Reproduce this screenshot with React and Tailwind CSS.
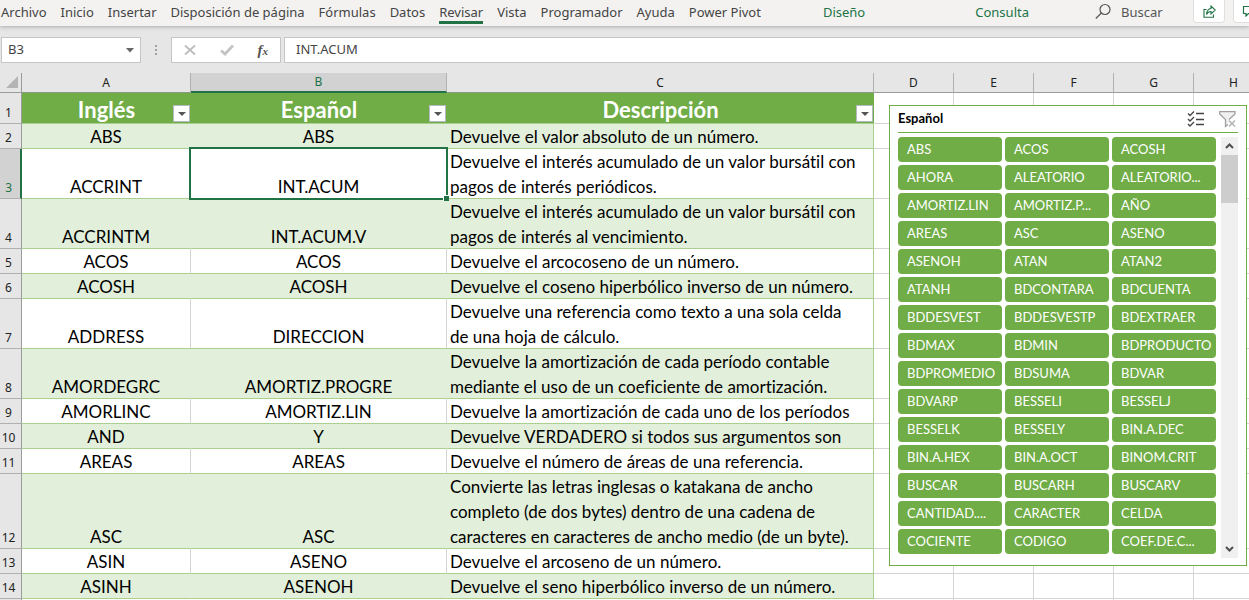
import { useState } from "react"

const TABS = [
  "Archivo",
  "Inicio",
  "Insertar",
  "Disposición de página",
  "Fórmulas",
  "Datos",
  "Revisar",
  "Vista",
  "Programador",
  "Ayuda",
  "Power Pivot",
]

const ROWS = [
  { n: 2, en: "ABS", es: "ABS", desc: "Devuelve el valor absoluto de un número." },
  { n: 3, en: "ACCRINT", es: "INT.ACUM", desc: "Devuelve el interés acumulado de un valor bursátil con\npagos de interés periódicos." },
  { n: 4, en: "ACCRINTM", es: "INT.ACUM.V", desc: "Devuelve el interés acumulado de un valor bursátil con\npagos de interés al vencimiento." },
  { n: 5, en: "ACOS", es: "ACOS", desc: "Devuelve el arcocoseno de un número." },
  { n: 6, en: "ACOSH", es: "ACOSH", desc: "Devuelve el coseno hiperbólico inverso de un número." },
  { n: 7, en: "ADDRESS", es: "DIRECCION", desc: "Devuelve una referencia como texto a una sola celda\nde una hoja de cálculo." },
  { n: 8, en: "AMORDEGRC", es: "AMORTIZ.PROGRE", desc: "Devuelve la amortización de cada período contable\nmediante el uso de un coeficiente de amortización." },
  { n: 9, en: "AMORLINC", es: "AMORTIZ.LIN", desc: "Devuelve la amortización de cada uno de los períodos" },
  { n: 10, en: "AND", es: "Y", desc: "Devuelve VERDADERO si todos sus argumentos son" },
  { n: 11, en: "AREAS", es: "AREAS", desc: "Devuelve el número de áreas de una referencia." },
  { n: 12, en: "ASC", es: "ASC", desc: "Convierte las letras inglesas o katakana de ancho\ncompleto (de dos bytes) dentro de una cadena de\ncaracteres en caracteres de ancho medio (de un byte)." },
  { n: 13, en: "ASIN", es: "ASENO", desc: "Devuelve el arcoseno de un número." },
  { n: 14, en: "ASINH", es: "ASENOH", desc: "Devuelve el seno hiperbólico inverso de un número." },
]

const SLICER = [
  "ABS", "ACOS", "ACOSH",
  "AHORA", "ALEATORIO", "ALEATORIO...",
  "AMORTIZ.LIN", "AMORTIZ.P...", "AÑO",
  "AREAS", "ASC", "ASENO",
  "ASENOH", "ATAN", "ATAN2",
  "ATANH", "BDCONTARA", "BDCUENTA",
  "BDDESVEST", "BDDESVESTP", "BDEXTRAER",
  "BDMAX", "BDMIN", "BDPRODUCTO",
  "BDPROMEDIO", "BDSUMA", "BDVAR",
  "BDVARP", "BESSELI", "BESSELJ",
  "BESSELK", "BESSELY", "BIN.A.DEC",
  "BIN.A.HEX", "BIN.A.OCT", "BINOM.CRIT",
  "BUSCAR", "BUSCARH", "BUSCARV",
  "CANTIDAD....", "CARACTER", "CELDA",
  "COCIENTE", "CODIGO", "COEF.DE.C...",
]

const EMPTY_COLS = ["D", "E", "F", "G", "H"]

function Ribbon() {
  return (
    <header className="relative z-10 flex h-[26px] shrink-0 items-start bg-[#f3f2f1] text-[13px] leading-6 text-[#444444] shadow-[0_1px_4px_rgba(0,0,0,0.25)]">
      <nav className="flex gap-3.5 pl-px whitespace-nowrap">
        {TABS.map((tab) => (
          <a
            key={tab}
            href="#"
            className={tab === "Revisar" ? "h-6 border-b-3 border-[#217346]" : "h-6"}
          >
            {tab}
          </a>
        ))}
      </nav>
      <nav className="ml-[62px] flex gap-[110px] text-[#217346]">
        <a href="#">Diseño</a>
        <a href="#">Consulta</a>
      </nav>
      <label className="ml-auto flex items-center gap-2.5 pr-6">
        <svg width="16" height="24" viewBox="0 0 16 24" fill="none" stroke="#555" strokeWidth="1.2">
          <circle cx="10" cy="9.500" r="5" />
          <path d="M6.400 13L0.800 18.500" />
        </svg>
        <input
          type="text"
          aria-label="Buscar"
          placeholder="Buscar"
          className="w-12 bg-transparent placeholder:text-[#555555] outline-none"
        />
      </label>
      <button aria-label="Compartir" className="mr-2 flex h-[23px] w-8 items-center justify-center rounded-b-sm border border-t-0 border-[#e1dfdd] bg-white">
        <svg width="13" height="13" viewBox="0 0 13 13" fill="none" stroke="#217346" strokeWidth="1.1">
          <path d="M3.500 4.500H1V12.300H10.500V9.500" />
          <path d="M3.500 9.500C3.800 6 5.500 3.800 8 3.500V1L12.300 5L8 9V6.500C6 6.500 4.500 7.500 3.500 9.500Z" />
        </svg>
      </button>
      <button aria-label="Comentarios" className="flex h-[23px] w-4 items-center overflow-hidden rounded-bl-sm border border-t-0 border-r-0 border-[#e1dfdd] bg-white pl-2">
        <svg className="shrink-0" width="14" height="12" viewBox="0 0 14 12" fill="none" stroke="#217346" strokeWidth="1.2">
          <path d="M1.500 1.500H12.500V8.500H6.500L4 11V8.500H1.500Z" />
        </svg>
      </button>
    </header>
  )
}

function FormulaBar() {
  return (
    <div className="flex h-[26px] shrink-0 pl-px text-[13px] text-[#444444]">
      <div className="flex w-[140px] items-center border border-[#c6c6c6] bg-white">
        <input aria-label="Cuadro de nombres" defaultValue="B3" className="w-full min-w-0 pl-1.5 outline-none" />
        <button aria-label="Abrir nombres" className="px-1.5">
          <svg width="8" height="5" viewBox="0 0 8 5" fill="#666">
            <path d="M0 0H8L4 4.500Z" />
          </svg>
        </button>
      </div>
      <div className="flex w-[30px] flex-col items-center justify-center gap-0.5">
        <span className="size-0.5 bg-[#a0a0a0]"></span>
        <span className="size-0.5 bg-[#a0a0a0]"></span>
        <span className="size-0.5 bg-[#a0a0a0]"></span>
      </div>
      <div className="flex w-[110px] items-center justify-around border border-[#c6c6c6] bg-white">
        <button aria-label="Cancelar">
          <svg width="12" height="12" viewBox="0 0 12 12" stroke="#bdbdbd" strokeWidth="1.8">
            <path d="M1 1.500L11 10.500M11 1.500L1 10.500" />
          </svg>
        </button>
        <button aria-label="Introducir">
          <svg width="14" height="12" viewBox="0 0 14 12" fill="none" stroke="#c4c4c4" strokeWidth="2.800">
            <path d="M1 6.500L5 10L13 1.500" />
          </svg>
        </button>
        <button aria-label="Insertar función" className="font-['Liberation_Serif',serif] text-[15px] leading-5 font-bold italic text-[#555555]">
          f<span className="text-[11px]">x</span>
        </button>
      </div>
      <input
        aria-label="Barra de fórmulas"
        defaultValue="INT.ACUM"
        className="ml-[3px] min-w-0 flex-1 border border-r-0 border-[#c6c6c6] bg-white pl-[11px] outline-none"
      />
    </div>
  )
}

function FilterButton({ label }) {
  return (
    <button
      aria-label={`Filtrar ${label}`}
      className="absolute right-px bottom-px flex size-[17px] items-center justify-center border border-[#b4b8c0] bg-white"
    >
      <svg width="8" height="4" viewBox="0 0 8 4" fill="#555">
        <path d="M0 0H8L4 4Z" />
      </svg>
    </button>
  )
}

function Sheet() {
  return (
    <table className="w-full min-w-[1274px] table-fixed border-separate border-spacing-0 bg-white">
      <colgroup>
        <col className="w-[22px]" />
        <col className="w-[169px]" />
        <col className="w-[256px]" />
        <col className="w-[427px]" />
        <col className="w-[80px]" />
        <col className="w-[80px]" />
        <col className="w-[80px]" />
        <col className="w-[80px]" />
        <col />
      </colgroup>
      <thead className="bg-[#e6e6e6] text-xs text-[#222222]">
        <tr className="h-5">
          <th className="border-r border-b border-[#9b9b9b] p-0">
            <svg className="ml-1.5" width="13" height="13" viewBox="0 0 13 13" fill="#b4b4b4">
              <path d="M12 0V12H0Z" />
            </svg>
          </th>
          <th className="border-r border-b border-r-[#b0b0b0] border-b-[#8a9a80] p-0 font-normal">A</th>
          <th className="border-r border-b-2 border-r-[#b0b0b0] border-b-[#217346] bg-[#d2d2d2] p-0 font-normal text-[#217346]">B</th>
          <th className="border-r border-b border-r-[#b0b0b0] border-b-[#8a9a80] p-0 font-normal">C</th>
          {EMPTY_COLS.map((col) => (
            <th key={col} className="border-r border-b border-r-[#b0b0b0] border-b-[#9b9b9b] p-0 font-normal">
              {col}
            </th>
          ))}
        </tr>
      </thead>
      <tbody className="font-[Lato,sans-serif] text-[17px] leading-[22px] text-black [font-variant-ligatures:none]">
        <tr className="h-[31px] text-[22px] text-white">
          <RowNumber n={1} />
          {["Inglés", "Español", "Descripción"].map((title) => (
            <th key={title} className="relative border-b border-[#a9d08e] bg-[#70ad47] p-0 align-bottom leading-[27px] font-bold">
              {title}
              <FilterButton label={title} />
            </th>
          ))}
          <EmptyCells />
        </tr>
        {ROWS.map((row) => {
          const even = row.n % 2 === 0
          const cell = even
            ? "border-r border-b border-r-[#e2efda] border-b-[#a9d08e] bg-[#e2efda] p-0 text-center align-bottom"
            : "border-r border-b border-r-[#d4d4d4] border-b-[#a9d08e] p-0 text-center align-bottom"

          return (
            <tr key={row.n}>
              <RowNumber n={row.n} active={row.n === 3} />
              <td className={cell}>{row.en}</td>
              <td className={row.n === 3 ? `${cell} relative` : cell}>
                {row.es}
                {row.n === 3 && (
                  <div className="absolute -top-0.5 -right-0.5 -bottom-0.5 -left-0.5 border-2 border-[#217346]">
                    <span className="absolute -right-[3px] -bottom-[3px] size-1.5 border-t border-l border-white bg-[#217346]"></span>
                  </div>
                )}
              </td>
              <td
                className={
                  even
                    ? "border-r border-b border-[#a9d08e] bg-[#e2efda] p-0 pl-[3px] leading-[25px] whitespace-pre"
                    : "border-r border-b border-[#a9d08e] p-0 pl-[3px] leading-[25px] whitespace-pre"
                }
              >
                <div className="-mb-px">{row.desc}</div>
              </td>
              <EmptyCells />
            </tr>
          )
        })}
        <tr className="h-[25px]">
          <RowNumber />
          <td></td>
          <td></td>
          <td></td>
          <EmptyCells />
        </tr>
      </tbody>
    </table>
  )
}

function RowNumber({ n, active }) {
  return (
    <th
      className={
        active
          ? "border-r-2 border-b border-r-[#217346] border-b-[#b0b0b0] bg-[#d2d2d2] p-0 pr-2 text-right align-bottom font-['Noto_Sans',sans-serif] text-xs leading-5 font-normal text-[#217346]"
          : "border-r border-b border-r-[#9b9b9b] border-b-[#b0b0b0] bg-[#e6e6e6] p-0 pr-1 text-center align-bottom font-['Noto_Sans',sans-serif] text-xs leading-5 font-normal text-[#222222]"
      }
    >
      {n}
    </th>
  )
}

function EmptyCells() {
  return EMPTY_COLS.map((col) => <td key={col} className="border-r border-b border-[#d4d4d4] p-0"></td>)
}

function Slicer() {
  const [picked, setPicked] = useState([])

  const toggle = (name) =>
    setPicked(picked.includes(name) ? picked.filter((p) => p !== name) : [...picked, name])

  return (
    <section className="absolute top-8 left-[889px] w-[358px] border border-[#70ad47] bg-white px-2 pb-[7px] font-[Lato,sans-serif]">
      <div className="flex h-[27px] items-center gap-3.5 border-b border-[#70ad47]">
        <h2 className="flex-1 text-[13px] font-bold text-black">Español</h2>
        <button aria-label="Selección múltiple">
          <svg width="18" height="16" viewBox="0 0 18 16" fill="none" stroke="#444" strokeWidth="1.300">
            <path d="M1 2.500L3 4.500L7 0.500M1 8L3 10L7 6M1 13L3 15L7 11" />
            <path d="M9 2.500H17M9 8.500H17M9 13.500H17" />
          </svg>
        </button>
        <button aria-label="Borrar filtro" onClick={() => setPicked([])} className="mr-0.5">
          <svg width="17" height="17" viewBox="0 0 17 17" fill="none" stroke="#a0a0a0" strokeWidth="1.300">
            <path d="M10 8.500L16 3V0.700H0.700V3L6.500 8.500V15.500L9 13.500" fill="#f0f0f0" />
            <path d="M10 9.500L16 15.500M16 9.500L10 15.500" stroke="#b4b4b4" strokeWidth="1.500" />
          </svg>
        </button>
      </div>
      <div className="flex justify-between pt-1">
        <div className="grid w-[318px] grid-cols-3 gap-[3px] pb-1">
          {SLICER.map((name) => (
            <button
              key={name}
              aria-pressed={picked.includes(name)}
              onClick={() => toggle(name)}
              className="h-[25px] rounded bg-[#70ad47] pl-[9px] text-left text-[13px] whitespace-nowrap text-white"
            >
              {name}
            </button>
          ))}
        </div>
        <div className="flex w-[17px] flex-col items-center bg-[#f0f0f0]">
          <button aria-label="Subir" className="flex h-[18px] items-center">
            <svg width="9" height="6" viewBox="0 0 9 6" fill="none" stroke="#505050" strokeWidth="2">
              <path d="M1 5L4.500 1.500L8 5" />
            </svg>
          </button>
          <div className="h-12 w-full bg-[#cdcdcd]"></div>
          <button aria-label="Bajar" className="mt-auto flex h-[18px] items-center">
            <svg width="9" height="6" viewBox="0 0 9 6" fill="none" stroke="#505050" strokeWidth="2">
              <path d="M1 1L4.500 4.500L8 1" />
            </svg>
          </button>
        </div>
      </div>
    </section>
  )
}

function App() {
  return (
    <div className="flex h-screen flex-col overflow-hidden bg-[#e6e6e6] font-['Noto_Sans',sans-serif]">
      <Ribbon />
      <div className="h-[11px] shrink-0"></div>
      <FormulaBar />
      <main className="relative mt-2.5 min-h-0 flex-1 overflow-hidden">
        <Sheet />
        <Slicer />
      </main>
    </div>
  )
}

export default App
